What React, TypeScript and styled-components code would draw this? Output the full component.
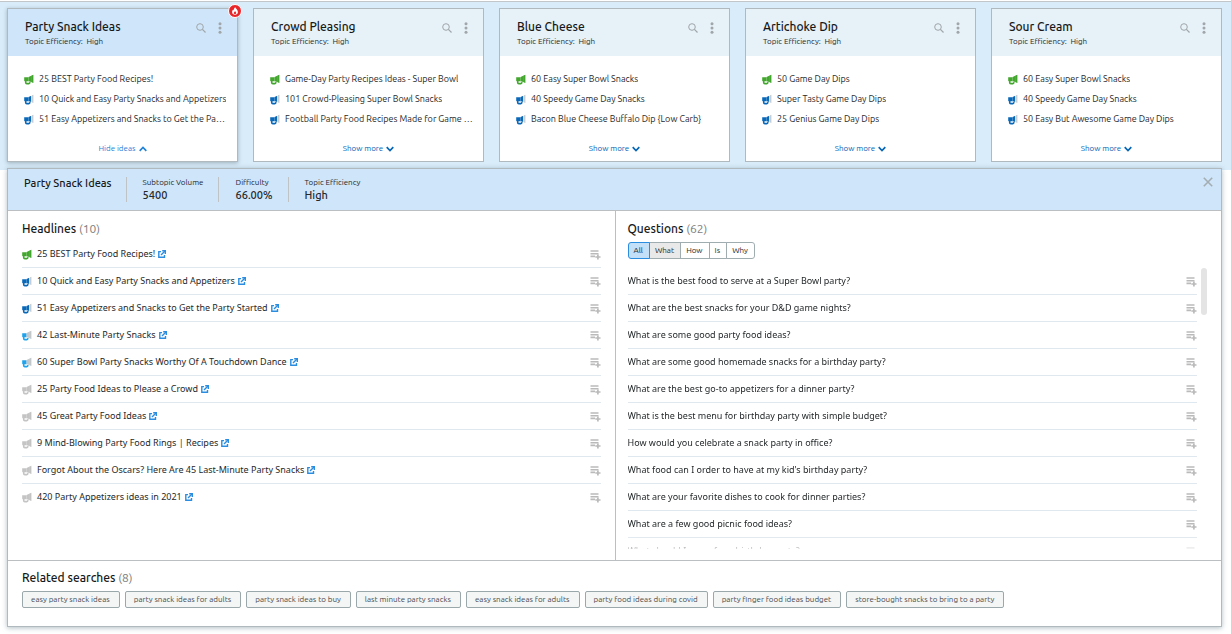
import React from "react";
import styled, { createGlobalStyle, css } from "styled-components";

const GlobalStyle = createGlobalStyle`
  *, *::before, *::after { box-sizing: border-box; }
  body {
    margin: 0;
    background: #fff;
    color: #25292b;
    font-family: Ubuntu, "Noto Sans", sans-serif;
    font-size: 9px;
    line-height: 12px;
  }
  h2, h3, p, ul, dl, dd, dt { margin: 0; padding: 0; }
  h2, h3 { color: #16191a; }
  ul { list-style: none; }
  button { font: inherit; color: inherit; cursor: pointer; }
  svg { display: block; flex: none; }
`;

type Level = "high" | "mid" | "low" | "none";

const levelColors: Record<Level, [string, string, string]> = {
  high: ["#43a62e", "#43a62e", "#43a62e"],
  mid: ["#0a68b8", "#0a68b8", "#c4cdd4"],
  low: ["#1ea3ec", "#c3c7ca", "#c3c7ca"],
  none: ["#c4c4c4", "#c4c4c4", "#c4c4c4"],
};

function Megaphone({ level }: { level: Level }) {
  const [body, cone, rim] = levelColors[level];
  return (
    <svg width="10" height="11" viewBox="0 0 10 11" aria-hidden="true">
      <path d="M0.2 3.2 H4.6 V7.2 H0.8 Q0.2 7.2 0.2 6.6 Z" fill={body} />
      <path d="M4.6 3 L7.2 1.8 V8 L4.6 7.2 Z" fill={cone} />
      <path d="M8 1.3 L9.4 0.7 V9.1 L8 8.5 Z" fill={rim} />
      {level !== "mid" && <path d="M7.1 1.8 L8.1 1.3 V8.5 L7.1 8 Z" fill={rim} />}
      <path d="M1.7 7.1 V8.4 Q1.7 9.6 2.8 9.6 H4.9 Q5.8 9.6 6 8.2" fill="none" stroke={body} strokeWidth="1.6" />
    </svg>
  );
}

function SearchIcon() {
  return (
    <svg width="10" height="10" viewBox="0 0 10 10" fill="none" stroke="#a0a6a9" aria-hidden="true">
      <circle cx="4" cy="4" r="3.3" strokeWidth="1" />
      <path d="M6.4 6.4 L9.5 9.5" strokeWidth="1.2" />
    </svg>
  );
}

function DotsIcon() {
  return (
    <svg width="4" height="12" viewBox="0 0 4 12" fill="#a0a6a9" aria-hidden="true">
      <circle cx="2" cy="1.8" r="1.5" />
      <circle cx="2" cy="6" r="1.5" />
      <circle cx="2" cy="10.2" r="1.5" />
    </svg>
  );
}

function Chevron({ up }: { up?: boolean }) {
  return (
    <svg width="8" height="6" viewBox="0 0 8 6" fill="none" stroke="currentColor" strokeWidth="1.7" aria-hidden="true">
      <path d={up ? "M0.7 4.8 L4 1.5 L7.3 4.8" : "M0.7 1.2 L4 4.5 L7.3 1.2"} />
    </svg>
  );
}

function ExternalIcon() {
  return (
    <svg width="8" height="8" viewBox="0 0 8 8" fill="none" stroke="#2b8de0" strokeWidth="1.4" aria-hidden="true">
      <path d="M3 1.6 H0.8 V7.2 H6.5 V5" />
      <path d="M4.2 0.8 H7.3 V3.9" />
      <path d="M7 1.1 L3 5.1" />
    </svg>
  );
}

function AddToListIcon() {
  return (
    <svg width="11" height="11" viewBox="0 0 11 11" fill="none" stroke="#bababa" strokeWidth="1.6" aria-hidden="true">
      <path d="M0.5 2 H8.5 M0.5 4.7 H8.5 M0.5 7.4 H5" />
      <path d="M7.9 5.4 V10.6 M5.3 8 H10.5" strokeWidth="1.7" />
    </svg>
  );
}

function FlameIcon() {
  return (
    <svg width="8" height="8" viewBox="0 0 8 8" aria-hidden="true">
      <path
        d="M4.3 0.2 C4.6 1.7 6.9 2.5 6.9 4.9 C6.9 6.7 5.7 7.7 4 7.7 C2.3 7.7 1.1 6.7 1.1 4.9 C1.1 3.8 1.7 3 2.2 2.4 C2.4 2.9 2.6 3.1 2.9 3.2 C2.8 2 3.3 0.8 4.3 0.2 Z"
        fill="#fff"
      />
      <path d="M4.1 4 C4.3 4.8 5.2 5 5.2 6 C5.2 6.7 4.7 7.1 4 7.1 C3.3 7.1 2.8 6.7 2.8 6 C2.8 5.1 3.8 4.9 4.1 4 Z" fill="#e8262a" />
    </svg>
  );
}

const Strip = styled.section`
  display: grid;
  grid-template-columns: repeat(5, minmax(0, 1fr));
  gap: 15px;
  margin-top: 1px;
  padding: 6px 9px 8px 7px;
  background: #d9ecf9;
  border-top: 1px solid #c2c6c9;
`;

const Card = styled.article<{ $active?: boolean }>`
  position: relative;
  display: flex;
  flex-direction: column;
  height: 154px;
  background: #fff;
  border: 1px solid #b0b9bd;
  ${(p) => p.$active && css`box-shadow: 0 1px 4px rgba(60, 85, 95, 0.4);`}
`;

const CardHead = styled.header<{ $active?: boolean }>`
  display: flex;
  justify-content: space-between;
  padding: 9px 15px 8px 17px;
  height: 47px;
  background: ${(p) => (p.$active ? "#cfe5fa" : "#e6f1f8")};
`;

const CardTitle = styled.h2`
  font-size: 12px;
  line-height: 18px;
  font-weight: 500;
`;

const CardMeta = styled.p`
  font-size: 8px;
  line-height: 12px;
  white-space: pre;
`;

const CardTools = styled.div`
  display: flex;
  align-items: center;
  gap: 12px;
  height: 20px;
`;

const IconButton = styled.button`
  display: inline-flex;
  padding: 0;
  border: 0;
  background: none;
`;

const IdeaList = styled.ul`
  padding: 13px 9px 0 16px;
`;

const Idea = styled.li`
  display: flex;
  align-items: center;
  gap: 5px;
  height: 20px;
`;

const IdeaText = styled.span`
  overflow: hidden;
  white-space: nowrap;
  text-overflow: ellipsis;
`;

const Toggle = styled.button<{ $active?: boolean }>`
  display: flex;
  align-items: center;
  align-self: center;
  gap: 3px;
  margin: 14px 0 0;
  padding: 0;
  border: 0;
  background: none;
  font-size: 8px;
  color: ${(p) => (p.$active ? "#1f82d8" : "#0565b6")};
`;

const Badge = styled.span`
  position: absolute;
  top: -5px;
  right: -5px;
  display: flex;
  align-items: center;
  justify-content: center;
  width: 14px;
  height: 14px;
  border: 1px solid #fff;
  border-radius: 50%;
  background: #e8262a;
`;

const Panel = styled.section`
  position: relative;
  margin: -2px 9px 7px 7px;
  background: #fff;
  border: 1px solid #b0b9bd;
  box-shadow: 0 1px 5px rgba(60, 95, 105, 0.4);
`;

const PanelHead = styled.header`
  display: flex;
  align-items: flex-start;
  height: 42px;
  padding: 8px 8px 0 16px;
  background: #cfe5fa;
  border-bottom: 1px solid #bcbfc1;
`;

const PanelTitle = styled.h2`
  padding-right: 14px;
  font-size: 11px;
  line-height: 13px;
  font-weight: 500;
`;

const Stats = styled.dl`
  display: flex;
  flex: 1;
`;

const Stat = styled.div`
  height: 25px;
  padding: 0 15px 0 16px;
  border-left: 1px solid #bfc3c6;
`;

const StatName = styled.dt`
  font-size: 8px;
  line-height: 12px;
`;

const StatValue = styled.dd`
  font-size: 11px;
  line-height: 13px;
  font-weight: 500;
`;

const Columns = styled.div`
  display: grid;
  grid-template-columns: minmax(0, 1fr) minmax(0, 1fr);
  border-bottom: 1px solid #bcbfc1;
`;

const Column = styled.section`
  min-height: 349px;
  padding: 10px 14px 11px 14px;
  & + & {
    border-left: 1px solid #bcbfc1;
    padding-left: 12px;
  }
`;

const SectionTitle = styled.h3`
  font-size: 12px;
  line-height: 16px;
  font-weight: 500;
`;

const Count = styled.span`
  font-weight: 400;
  color: #7d7d7d;
`;

const Row = styled.li`
  display: flex;
  align-items: center;
  gap: 5px;
  height: 27px;
  border-bottom: 1px solid #dfe8ef;
  font-family: "Noto Sans", sans-serif;
  &:last-child { border-bottom-color: transparent; }
`;

const HeadlineRows = styled.ul`
  padding-top: 4px;
`;

const HeadlineLink = styled.a`
  display: flex;
  align-items: center;
  gap: 3px;
  color: inherit;
  text-decoration: none;
`;

const RowAction = styled(IconButton)`
  margin-left: auto;
`;

const Filters = styled.div`
  display: flex;
  margin-top: 5px;
`;

const Filter = styled.button<{ $tone?: "selected" | "hover" }>`
  height: 17px;
  margin: 0 0 0 -1px;
  padding: 0 6px 0 5px;
  border: 1px solid #a0adb0;
  background: #fff;
  font-size: 8px;
  line-height: 13px;
  ${(p) => p.$tone === "hover" && css`background: #e9e9e9;`}
  ${(p) => p.$tone === "selected" && css`
    position: relative;
    background: #c4dff8;
    border-color: #2b8de0;
  `}
  &:first-child { margin-left: 0; border-radius: 3px 0 0 3px; }
  &:last-child { border-radius: 0 3px 3px 0; }
`;

const QuestionArea = styled.div`
  display: grid;
  grid-template-columns: minmax(0, 1fr) 6px;
  gap: 4px;
  margin: 9px 0 0 0;
  height: 281px;
`;

const QuestionRows = styled.ul`
  height: 281px;
  overflow: hidden;
  mask-image: linear-gradient(to bottom, #000 268px, transparent 285px);
`;

const ScrollThumb = styled.div`
  height: 47px;
  border-radius: 3px;
  background: #e4e4e4;
`;

const Related = styled.section`
  padding: 9px 14px 18px;
`;

const Chips = styled.div`
  display: flex;
  flex-wrap: wrap;
  gap: 5px;
  margin-top: 5px;
`;

const Chip = styled.button`
  height: 17px;
  padding: 0 9px 0 8px;
  border: 1px solid #9aa8ab;
  border-radius: 2px;
  background: #f4f5f5;
  color: #484c4e;
  font-size: 8px;
  line-height: 15px;
`;

const cards = [
  { title: "Party Snack Ideas", ideas: ["25 BEST Party Food Recipes!", "10 Quick and Easy Party Snacks and Appetizers", "51 Easy Appetizers and Snacks to Get the Party Started"] },
  { title: "Crowd Pleasing", ideas: ["Game-Day Party Recipes Ideas - Super Bowl", "101 Crowd-Pleasing Super Bowl Snacks", "Football Party Food Recipes Made for Game Day Snacking"] },
  { title: "Blue Cheese", ideas: ["60 Easy Super Bowl Snacks", "40 Speedy Game Day Snacks", "Bacon Blue Cheese Buffalo Dip {Low Carb}"] },
  { title: "Artichoke Dip", ideas: ["50 Game Day Dips", "Super Tasty Game Day Dips", "25 Genius Game Day Dips"] },
  { title: "Sour Cream", ideas: ["60 Easy Super Bowl Snacks", "40 Speedy Game Day Snacks", "50 Easy But Awesome Game Day Dips"] },
];

const headlines: [Level, string][] = [
  ["high", "25 BEST Party Food Recipes!"],
  ["mid", "10 Quick and Easy Party Snacks and Appetizers"],
  ["mid", "51 Easy Appetizers and Snacks to Get the Party Started"],
  ["low", "42 Last-Minute Party Snacks"],
  ["low", "60 Super Bowl Party Snacks Worthy Of A Touchdown Dance"],
  ["none", "25 Party Food Ideas to Please a Crowd"],
  ["none", "45 Great Party Food Ideas"],
  ["none", "9 Mind-Blowing Party Food Rings | Recipes"],
  ["none", "Forgot About the Oscars? Here Are 45 Last-Minute Party Snacks"],
  ["none", "420 Party Appetizers ideas in 2021"],
];

const questions = [
  "What is the best food to serve at a Super Bowl party?",
  "What are the best snacks for your D&D game nights?",
  "What are some good party food ideas?",
  "What are some good homemade snacks for a birthday party?",
  "What are the best go-to appetizers for a dinner party?",
  "What is the best menu for birthday party with simple budget?",
  "How would you celebrate a snack party in office?",
  "What food can I order to have at my kid's birthday party?",
  "What are your favorite dishes to cook for dinner parties?",
  "What are a few good picnic food ideas?",
  "What should I serve for a birthday party?",
];

const searches = [
  "easy party snack ideas",
  "party snack ideas for adults",
  "party snack ideas to buy",
  "last minute party snacks",
  "easy snack ideas for adults",
  "party food ideas during covid",
  "party finger food ideas budget",
  "store-bought snacks to bring to a party",
];

export default function App() {
  return (
    <>
      <GlobalStyle />
      <Strip>
        {cards.map((card, i) => {
          const active = i === 0;
          return (
            <Card key={card.title} $active={active}>
              <CardHead $active={active}>
                <div>
                  <CardTitle>{card.title}</CardTitle>
                  <CardMeta>{"Topic Efficiency:  High"}</CardMeta>
                </div>
                <CardTools>
                  <IconButton aria-label="Search"><SearchIcon /></IconButton>
                  <IconButton aria-label="More options"><DotsIcon /></IconButton>
                </CardTools>
              </CardHead>
              <IdeaList>
                {card.ideas.map((idea, n) => (
                  <Idea key={idea}>
                    <Megaphone level={n === 0 ? "high" : "mid"} />
                    <IdeaText>{idea}</IdeaText>
                  </Idea>
                ))}
              </IdeaList>
              <Toggle $active={active} aria-expanded={active}>
                {active ? "Hide ideas" : "Show more"}
                <Chevron up={active} />
              </Toggle>
              {active && <Badge><FlameIcon /></Badge>}
            </Card>
          );
        })}
      </Strip>

      <Panel>
        <PanelHead>
          <PanelTitle>Party Snack Ideas</PanelTitle>
          <Stats>
            <Stat><StatName>Subtopic Volume</StatName><StatValue>5400</StatValue></Stat>
            <Stat><StatName>Difficulty</StatName><StatValue>66.00%</StatValue></Stat>
            <Stat><StatName>Topic Efficiency</StatName><StatValue>High</StatValue></Stat>
          </Stats>
          <IconButton aria-label="Close">
            <svg width="10" height="10" viewBox="0 0 10 10" stroke="#a3adb2" strokeWidth="1.6" aria-hidden="true">
              <path d="M0.8 0.8 L9.2 9.2 M9.2 0.8 L0.8 9.2" />
            </svg>
          </IconButton>
        </PanelHead>

        <Columns>
          <Column>
            <SectionTitle>Headlines <Count>(10)</Count></SectionTitle>
            <HeadlineRows>
              {headlines.map(([level, text]) => (
                <Row key={text}>
                  <Megaphone level={level} />
                  <HeadlineLink href="#">{text}<ExternalIcon /></HeadlineLink>
                  <RowAction aria-label="Add to list"><AddToListIcon /></RowAction>
                </Row>
              ))}
            </HeadlineRows>
          </Column>
          <Column>
            <SectionTitle>Questions <Count>(62)</Count></SectionTitle>
            <Filters>
              <Filter $tone="selected" aria-pressed="true">All</Filter>
              <Filter $tone="hover">What</Filter>
              <Filter>How</Filter>
              <Filter>Is</Filter>
              <Filter>Why</Filter>
            </Filters>
            <QuestionArea>
              <QuestionRows>
                {questions.map((q) => (
                  <Row key={q}>
                    {q}
                    <RowAction aria-label="Add to list"><AddToListIcon /></RowAction>
                  </Row>
                ))}
              </QuestionRows>
              <ScrollThumb />
            </QuestionArea>
          </Column>
        </Columns>

        <Related>
          <SectionTitle>Related searches <Count>(8)</Count></SectionTitle>
          <Chips>
            {searches.map((s) => <Chip key={s}>{s}</Chip>)}
          </Chips>
        </Related>
      </Panel>
    </>
  );
}
